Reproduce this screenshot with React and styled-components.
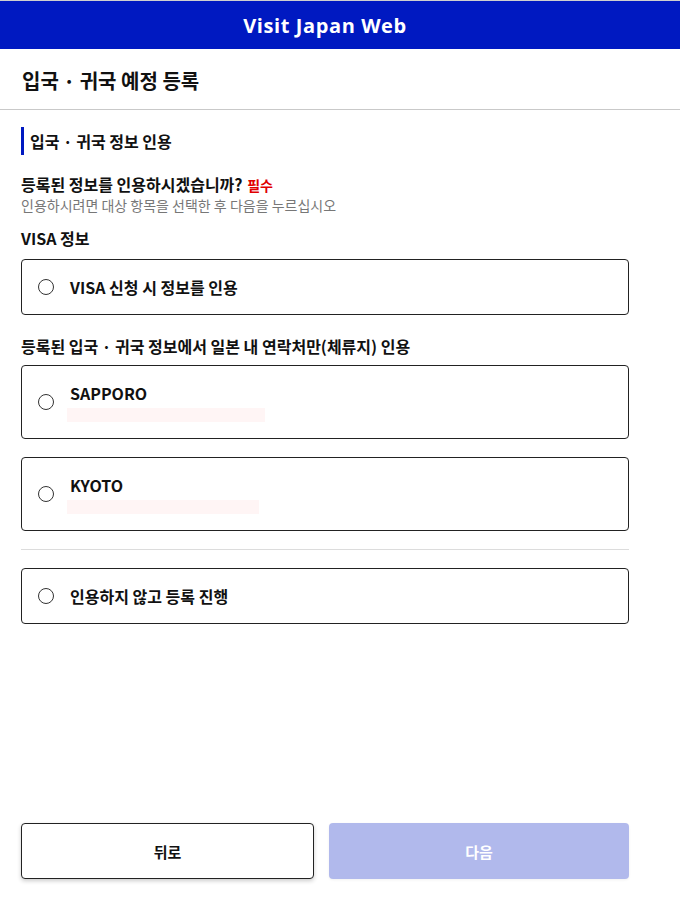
import React from "react";
import styled, { createGlobalStyle } from "styled-components";

const Global = createGlobalStyle`
  html, body { margin: 0; padding: 0; background: #fff; }
  body { font-family: "Noto Sans CJK KR", "Noto Sans", sans-serif; color: #111; }
  * { box-sizing: border-box; }
`;

const Page = styled.div`
  height: 100vh;
  display: flex;
  flex-direction: column;
`;

const Header = styled.header`
  height: 49px;
  border-top: 1px solid #cfcfcf;
  background: #0019c1;
  display: flex;
  align-items: center;
  justify-content: center;
  padding-right: 30px;
  color: #fff;
  font-family: "Open Sans", "Noto Sans", sans-serif;
  font-weight: 700;
  font-size: 20px;
  letter-spacing: 0.6px;
`;

const TitleBar = styled.div`
  height: 61px;
  border-bottom: 1px solid #c9c9c9;
  display: flex;
  align-items: center;
  padding: 2px 22px 0;
  font-size: 20px;
  font-weight: 700;
`;

const Content = styled.main`
  padding: 17px 21px 0;
  width: 650px;
  display: flex;
  flex-direction: column;
`;

const SectionHead = styled.h2`
  margin: 0;
  height: 28px;
  border-left: 3px solid #0019c1;
  padding-left: 6px;
  display: flex;
  align-items: center;
  font-size: 16px;
  font-weight: 700;
`;

const Question = styled.div`
  margin-top: 18px;
  font-size: 16px;
  font-weight: 700;
  line-height: 22px;
`;

const Required = styled.span`
  color: #e00000;
  font-size: 14px;
  margin-left: 1px;
`;

const Hint = styled.div`
  font-size: 14px;
  line-height: 18px;
  color: #777;
`;

const Label = styled.div`
  margin-top: ${(p) => p.$mt || 14}px;
  font-size: 16px;
  font-weight: 700;
  line-height: 22px;
`;

const Card = styled.label`
  margin-top: ${(p) => p.$mt || 0}px;
  width: 608px;
  min-height: ${(p) => (p.$tall ? 74 : 56)}px;
  border: 1px solid #222;
  border-radius: 4px;
  display: flex;
  align-items: center;
  padding-left: 16px;
  gap: 16px;
  cursor: pointer;
`;

const Radio = styled.span`
  width: 16px;
  height: 16px;
  border-radius: 50%;
  border: 1.4px solid #333;
  flex: none;
`;

const CardText = styled.div`
  display: flex;
  flex-direction: column;
`;

const OptionTitle = styled.span`
  font-size: 16px;
  font-weight: 700;
  line-height: 20px;
`;

const Masked = styled.span`
  display: block;
  margin: 5px 0 0 -3px;
  height: 14px;
  background: #fff5f5;
`;

const Divider = styled.hr`
  width: 608px;
  margin: 18px 0 18px;
  border: 0;
  border-top: 1px solid #dcdcdc;
`;

const Footer = styled.footer`
  margin-top: auto;
  padding: 0 21px 22px;
  display: grid;
  grid-template-columns: 293px 300px;
  column-gap: 15px;
`;

const Button = styled.button`
  height: 56px;
  border-radius: 4px;
  font-size: 15px;
  font-weight: 700;
  font-family: "Noto Sans CJK KR", sans-serif;
  border: ${(p) => (p.$primary ? "none" : "1px solid #222")};
  background: ${(p) => (p.$primary ? "#b1b9ec" : "#fff")};
  color: ${(p) => (p.$primary ? "#fff" : "#111")};
  box-shadow: ${(p) => (p.$primary ? "0 1px 3px rgba(0,0,0,0.06)" : "0 2px 4px rgba(0,0,0,0.2)")};
`;

function Option({ title, masked, mt }) {
  return (
    <Card $mt={mt} $tall={!!masked}>
      <Radio />
      <CardText>
        <OptionTitle>{title}</OptionTitle>
        {masked && <Masked style={{ width: masked }} />}
      </CardText>
    </Card>
  );
}

export default function App() {
  return (
    <Page>
      <Global />
      <Header>Visit Japan Web</Header>
      <TitleBar>입국 · 귀국 예정 등록</TitleBar>
      <Content>
        <SectionHead>입국 · 귀국 정보 인용</SectionHead>
        <Question>
          등록된 정보를 인용하시겠습니까? <Required>필수</Required>
        </Question>
        <Hint>인용하시려면 대상 항목을 선택한 후 다음을 누르십시오</Hint>
        <Label $mt={13}>VISA 정보</Label>
        <Option mt={10} title="VISA 신청 시 정보를 인용" />
        <Label $mt={20}>등록된 입국 · 귀국 정보에서 일본 내 연락처만(체류지) 인용</Label>
        <Option mt={8} title="SAPPORO" masked={198} />
        <Option mt={18} title="KYOTO" masked={192} />
        <Divider />
        <Option title="인용하지 않고 등록 진행" />
      </Content>
      <Footer>
        <Button>뒤로</Button>
        <Button $primary>다음</Button>
      </Footer>
    </Page>
  );
}
